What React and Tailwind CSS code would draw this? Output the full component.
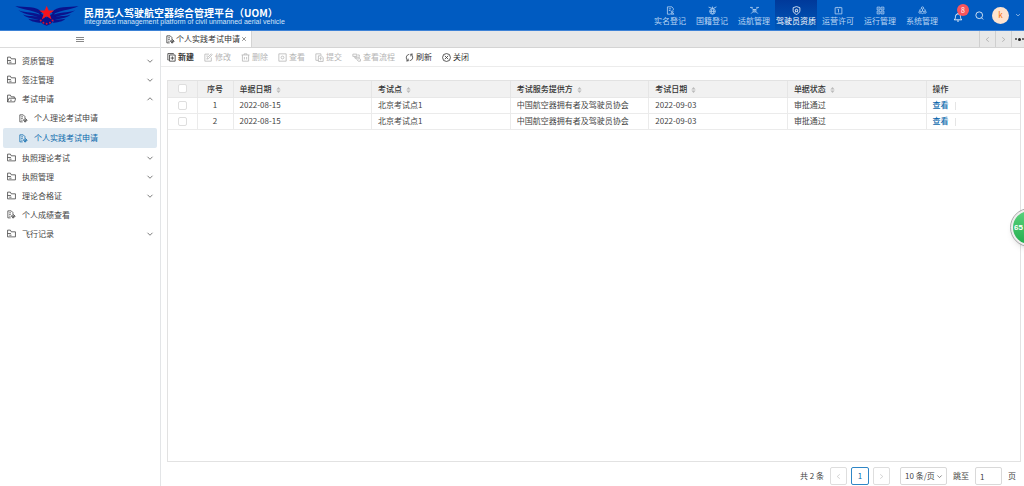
import React, { useState } from 'react';

const NAV = [
  { label: '实名登记', icon: 'docUser' },
  { label: '国籍登记', icon: 'globe' },
  { label: '适航管理', icon: 'drone' },
  { label: '驾驶员资质', icon: 'shield', active: true },
  { label: '运营许可', icon: 'permit' },
  { label: '运行管理', icon: 'grid' },
  { label: '系统管理', icon: 'nodes' },
];

const MENU = [
  { label: '资质管理', icon: 'folder' },
  { label: '签注管理', icon: 'folder' },
  {
    label: '考试申请',
    icon: 'folderOpen',
    open: true,
    children: [
      { label: '个人理论考试申请' },
      { label: '个人实践考试申请', active: true },
    ],
  },
  { label: '执照理论考试', icon: 'folder' },
  { label: '执照管理', icon: 'folder' },
  { label: '理论合格证', icon: 'folder' },
  { label: '个人成绩查看', icon: 'docEdit', leaf: true },
  { label: '飞行记录', icon: 'folder' },
];

const ACTIONS = [
  { label: '新建', icon: 'add', strong: true },
  { label: '修改', icon: 'edit', disabled: true },
  { label: '删除', icon: 'trash', disabled: true },
  { label: '查看', icon: 'view', disabled: true },
  { label: '提交', icon: 'submit', disabled: true },
  { label: '查看流程', icon: 'flow', disabled: true },
  { label: '刷新', icon: 'refresh' },
  { label: '关闭', icon: 'close' },
];

const COLUMNS = ['单据日期', '考试点', '考试服务提供方', '考试日期', '单据状态'];

const ROWS = [
  { id: 1, cells: ['2022-08-15', '北京考试点1', '中国航空器拥有者及驾驶员协会', '2022-09-03', '审批通过'] },
  { id: 2, cells: ['2022-08-15', '北京考试点1', '中国航空器拥有者及驾驶员协会', '2022-09-03', '审批通过'] },
];

const SHAPES = {
  folder: <path d="M1 14V2h5l1.500 3H15v9zM1 8h6M4 11h4" />,
  folderOpen: <path d="M1 14V2h5l1.500 3H13v2.500M1 14l2.500-6.500H15.500L13.500 14zM5.500 11h3" />,
  docEdit: <path d="M6.500 14h-5V1.500h6L10.500 4.500V7M4 5h3M4 8h2.500M4 11h2M11 7.500l3.500 3.500-3.500 3.500-3.500-3.500zM11 9.500v5M9 11h5" />,
  docUser: <path d="M7 14.500H2.500v-13h8l2.500 3v3M5 5h4M5 8h3M11 8.500a1.500 1.500 0 1 1 0 3 1.500 1.500 0 0 1 0-3M8 14.500c0-3 6-3 6 0z" />,
  globe: <path d="M1 2l6 2M15 1.500l-6 3M8 1v3M8 4.500a5 5 0 1 1 0 10 5 5 0 0 1 0-10M3 9.500h10M8 4.500c-3 3-3 7 0 10M8 4.500c3 3 3 7 0 10" />,
  drone: <path d="M0 2.500h5M11 2.500h5M2.500 3l3 3.500h5l3-3.500M5.500 6.500h5v4h-5zM5.500 10L2 13.500M10.500 10l3.500 3.500M7 8.500h2" />,
  shield: <path d="M8 1l6 2v5c0 3.500-3 5.500-6 7-3-1.500-6-3.500-6-7V3zM8 5l1 1.700 1.800.5-1.300 1.500.2 2L8 10l-1.700.700.200-2-1.300-1.500L7 6.700z" />,
  permit: <path d="M2 3h12v11H2zM5.500 1.500v2M10.500 1.500v2M8 5.500v6M6.500 7L8 5.500" />,
  grid: <path d="M2 2h5v5H2zM9 2h5v5H9zM2 9h5v5H2zM9 9h5v5H9zM4 4.500h1M11 4.500h1M4 11.500h1M11 11.500h1" />,
  nodes: <path d="M8 1.500a2 2 0 1 1 0 4 2 2 0 0 1 0-4M3.500 9a2 2 0 1 1 0 4 2 2 0 0 1 0-4M12.500 9a2 2 0 1 1 0 4 2 2 0 0 1 0-4M5.500 4.500C4 5.500 3 7 3 9M10.500 4.500C12 5.500 13 7 13 9M6 13c1.500.700 2.500.700 4 0M8 5.500V9l-2.500 1M8 9l2.500 1" />,
  bell: <path d="M2 12.500h12c-1.500-1.500-2-3-2-5.500a4 4 0 0 0-8 0c0 2.500-.500 4-2 5.500M8 1.500V3M6.500 14.500h3" />,
  search: <path d="M7.500 1.500a6 6 0 1 1 0 12 6 6 0 0 1 0-12M11.500 12l3 3" />,
  down: <path d="M3 5.500l5 5 5-5" />,
  up: <path d="M3 10.500l5-5 5 5" />,
  left: <path d="M11 3L5 8l6 5" />,
  right: <path d="M5 3l6 5-6 5" />,
  cross: <path d="M3 3l10 10M13 3L3 13" />,
  add: <path d="M11.500 2V1h-10v11.500H3M4.500 3.500h10v11h-10zM9.500 6v6M6.500 9h6" />,
  edit: <path d="M9 2H1.500v12.500H13V8M5 11l1-3 7-6.500 1.500 1.500L8 10zM4 5.500h3" />,
  trash: <path d="M1 3.500h14M5.500 3.500v-2h5v2M2.500 3.500v11h11v-11M6 7v4.500M10 7v4.500" />,
  view: <path d="M1.500 1.500h13v13h-13zM8 5.500a2.500 2.500 0 1 1 0 5 2.500 2.500 0 0 1 0-5" />,
  submit: <path d="M6 13H1.500V1.500h9V4M6 15V5h5l3.500 3v7zM10 13V8M8 10l2-2 2 2" />,
  flow: <path d="M1.500 2h7v4h-7zM5 6v3h2M7 7.500h6v3H7zM9 12l2 2.500h4v-4M10 3.500h3v3" />,
  refresh: <path d="M6 14H2M5.500 14V10M5 13.500C0.500 10 2 3 7.500 2.500M10 2h4M10.500 2v4M11 2.500c4.500 3.500 3 10.500-2.500 11" />,
  close: <path d="M8 1a7 7 0 1 1 0 14A7 7 0 0 1 8 1M5 5l6 6M11 5l-6 6" />,
};

const Icon = ({ name, className = 'size-2' }) => (
  <svg
    viewBox="0 0 16 16"
    className={`shrink-0 ${className}`}
    fill="none"
    stroke="currentColor"
    strokeWidth="1.4"
    aria-hidden="true"
  >
    {SHAPES[name]}
  </svg>
);

const Logo = () => (
  <svg viewBox="42 16 198 64" className="h-[21px] w-[66px] shrink-0" aria-hidden="true">
    <g fill="#0a128c">
      <path d="M44 19c30 4 66 0 82 19l-5 8c-12-14-54-14-77-27z" />
      <path d="M54 32c22 9 52 5 68 15l-4 8c-16-10-46-8-64-23z" />
      <path d="M68 45c16 7 38 3 51 9v9c-14-7-38-4-51-18z" />
      <path d="M84 58c10 4 24 1 34 4l4 9c-12-3-28-2-38-13z" />
      <path d="M237 19c-30 4-66 0-82 19l5 8c12-14 54-14 77-27z" />
      <path d="M227 32c-22 9-52 5-68 15l4 8c16-10 46-8 64-23z" />
      <path d="M213 45c-16 7-38 3-51 9v9c14-7 38-4 51-18z" />
      <path d="M197 58c-10 4-24 1-34 4l-4 9c12-3 28-2 38-13z" />
      <path d="M120 40c-8 16-2 32 20 39 22-7 30-23 22-39l-10 6-12 8-11-8z" />
    </g>
    <path fill="#f5121d" d="M140 18l6 15h17l-14 10 6 17-15-10-15 10 6-17-14-10h17z" />
    <g fill="#d5122f">
      <circle cx="122" cy="63" r="3" />
      <circle cx="130" cy="70" r="3" />
      <circle cx="140" cy="73" r="3" />
      <circle cx="150" cy="70" r="3" />
      <circle cx="158" cy="63" r="3" />
    </g>
  </svg>
);

const TopBar = () => (
  <header className="flex h-[31px] shrink-0 items-stretch border-b border-[#3d82d6] bg-[#005bc1] text-white">
    <div className="flex items-center gap-1 pl-3.5">
      <Logo />
      <div className="pt-0.5">
        <h1 className="text-[10px] leading-[11px] font-bold whitespace-nowrap">民用无人驾驶航空器综合管理平台（UOM）</h1>
        <p className="font-['Liberation_Sans'] text-[7px] leading-[8px] whitespace-nowrap text-[#d3e4f8]">
          Integrated management platform of civil unmanned aerial vehicle
        </p>
      </div>
    </div>
    <nav className="ml-auto flex">
      {NAV.map((item) => (
        <a
          key={item.label}
          href="#"
          className={`flex w-[42px] flex-col items-center gap-px pt-1.5 leading-[10px] whitespace-nowrap ${
            item.active ? 'bg-linear-to-b from-[#00399a] to-[#0057b8] text-white' : 'text-[#b9d5f3]'
          }`}
        >
          <Icon name={item.icon} className="size-[9px]" />
          {item.label}
        </a>
      ))}
    </nav>
    <div className="flex items-center pl-2.5">
      <button type="button" aria-label="消息" className="relative pt-1">
        <Icon name="bell" className="size-2.5" />
        <span className="absolute -top-1 left-1 flex size-3 items-center justify-center rounded-full bg-[#f9545c] text-[7px]">
          8
        </span>
      </button>
      <button type="button" aria-label="搜索" className="ml-3">
        <Icon name="search" className="size-[9px]" />
      </button>
      <button type="button" className="ml-2 flex size-[17px] items-center justify-center rounded-full bg-[#fde3cf] text-[8px] text-[#f56a00]">
        k
      </button>
      <button type="button" aria-label="展开" className="mr-[3px] ml-1.5">
        <Icon name="down" className="size-1.5" />
      </button>
    </div>
  </header>
);

const Sidebar = () => (
  <aside className="flex w-[161px] shrink-0 flex-col border-r border-[#e3e5e7] text-[#444]">
    <button type="button" aria-label="收起菜单" className="flex h-[17px] flex-col items-center justify-center gap-px border-b border-[#dcdcdc]">
      <span className="h-px w-2 bg-[#888]" />
      <span className="h-px w-2 bg-[#888]" />
      <span className="h-px w-2 bg-[#888]" />
    </button>
    <ul className="px-[3px] pt-[3px]">
      {MENU.map((item) => (
        <li key={item.label}>
          <a href="#" className="flex h-[19px] items-center pr-[3px] pl-1">
            <Icon name={item.icon} className="mr-1.5 size-[9px]" />
            {item.label}
            {!item.leaf && <Icon name={item.open ? 'up' : 'down'} className="ml-auto size-2" />}
          </a>
          {item.children && (
            <ul>
              {item.children.map((sub) => (
                <li key={sub.label}>
                  <a
                    href="#"
                    className={`flex h-5 items-center rounded-xs pl-4 ${sub.active ? 'bg-[#dde8f1] text-[#0a68ac]' : ''}`}
                  >
                    <Icon name="docEdit" className="mr-1.5 size-[9px]" />
                    {sub.label}
                  </a>
                </li>
              ))}
            </ul>
          )}
        </li>
      ))}
    </ul>
  </aside>
);

const TabStrip = () => (
  <div className="flex h-[17px] shrink-0 border-b border-[#d4d4d4] bg-[#e8e8e8] text-[#333]">
    <div className="flex items-center border-r border-[#d4d4d4] bg-white pr-1 pl-[5px]">
      <Icon name="docEdit" className="mr-px size-[9px]" />
      个人实践考试申请
      <button type="button" aria-label="关闭标签" className="ml-px">
        <Icon name="cross" className="size-1.5" />
      </button>
    </div>
    <div className="ml-auto flex">
      <button type="button" aria-label="向左" className="flex w-4 items-center justify-center border-l border-[#cfcfcf] text-[#999]">
        <Icon name="left" className="size-[7px]" />
      </button>
      <button type="button" aria-label="向右" className="flex w-4 items-center justify-center border-l border-[#cfcfcf] text-[#999]">
        <Icon name="right" className="size-[7px]" />
      </button>
      <button type="button" aria-label="更多" className="flex w-[13px] items-center justify-end gap-px border-l border-[#cfcfcf]">
        <span className="size-0.5 rounded-full bg-[#444]" />
        <span className="size-[3px] rounded-full bg-[#222]" />
        <span className="size-0.5 rounded-full bg-[#444]" />
      </button>
    </div>
  </div>
);

const Toolbar = () => (
  <div className="flex h-[19px] shrink-0 items-center gap-2.5 border-b border-[#ececec] pl-1.5">
    {ACTIONS.map((action) => (
      <button
        key={action.label}
        type="button"
        disabled={action.disabled}
        className={`flex items-center gap-0.5 ${action.disabled ? 'text-[#b5b5b5]' : 'text-[#333]'} ${
          action.strong ? 'font-bold' : ''
        }`}
      >
        <Icon name={action.icon} className="size-[9px]" />
        {action.label}
      </button>
    ))}
  </div>
);

const SortMark = () => (
  <svg viewBox="0 0 8 10" className="ml-1 inline h-1.5 w-[5px] fill-[#bbb]" aria-hidden="true">
    <path d="M4 0l3.500 4.200h-7zM4 10L.5 5.800h7z" />
  </svg>
);

const CheckBox = ({ label }) => (
  <input
    type="checkbox"
    aria-label={label}
    className="mx-auto block size-[9px] appearance-none rounded-xs border border-[#dedede] bg-white checked:bg-[#0a68ac]"
  />
);

const ExamTable = () => (
  <div className="mt-[13px] mr-[3px] ml-1.5 flex-1 border border-[#e2e2e2]">
    <table className="w-full table-fixed border-collapse text-left leading-[10px] text-[#444]">
      <colgroup>
        <col className="w-[29px]" />
        <col className="w-9" />
        {COLUMNS.map((name) => (
          <col key={name} />
        ))}
        <col className="w-[94px]" />
      </colgroup>
      <thead>
        <tr className="h-4 border-b border-[#e8e8e8] bg-[#f1f1f1] text-[#333]">
          <th className="border-r border-[#e5e5e5]">
            <CheckBox label="全选" />
          </th>
          <th className="border-r border-[#e5e5e5] text-center font-medium">序号</th>
          {COLUMNS.map((name) => (
            <th key={name} className="border-r border-[#e5e5e5] pl-1.5 font-medium whitespace-nowrap">
              {name}
              <SortMark />
            </th>
          ))}
          <th className="pl-1.5 font-medium">操作</th>
        </tr>
      </thead>
      <tbody>
        {ROWS.map((row) => (
          <tr key={row.id} className="h-4 border-b border-[#ebebeb]">
            <td className="border-r border-[#ebebeb]">
              <CheckBox label={`选择第${row.id}行`} />
            </td>
            <td className="border-r border-[#ebebeb] text-center">{row.id}</td>
            {row.cells.map((cell, i) => (
              <td key={COLUMNS[i]} className="border-r border-[#ebebeb] pl-1.5 whitespace-nowrap">
                {cell}
              </td>
            ))}
            <td className="pl-1.5">
              <a href="#" className="mr-1.5 font-medium text-[#0a68ac]">查看</a>
              <span className="inline-block h-2 w-px bg-[#e5e5e5] align-middle" />
            </td>
          </tr>
        ))}
      </tbody>
    </table>
  </div>
);

const Pagination = () => {
  const [page, setPage] = useState('1');

  return (
    <div className="flex h-6 shrink-0 items-center justify-end pt-1 pr-2 text-[#444]">
      <span>共 2 条</span>
      <button type="button" aria-label="上一页" className="ml-1.5 flex h-[18px] w-[17px] items-center justify-center rounded-xs border border-[#dedede] text-[#bbb]">
        <Icon name="left" className="size-[7px]" />
      </button>
      <button type="button" className="ml-1 h-[18px] w-[18px] rounded-xs border border-[#2f86c6] text-[#0a68ac]">
        1
      </button>
      <button type="button" aria-label="下一页" className="ml-1 flex h-[18px] w-[17px] items-center justify-center rounded-xs border border-[#dedede] text-[#bbb]">
        <Icon name="right" className="size-[7px]" />
      </button>
      <div className="relative ml-2.5 flex items-center">
        <select aria-label="每页条数" className="h-[18px] w-[47px] appearance-none rounded-xs border border-[#d9d9d9] pl-1">
          <option>10 条/页</option>
          <option>20 条/页</option>
          <option>50 条/页</option>
        </select>
        <Icon name="down" className="pointer-events-none absolute right-1 size-[7px]" />
      </div>
      <label htmlFor="jump" className="ml-1.5">跳至</label>
      <input
        id="jump"
        value={page}
        onChange={(e) => setPage(e.target.value)}
        className="mr-1.5 ml-1.5 h-[18px] w-[27px] rounded-xs border border-[#d9d9d9] pl-1"
      />
      <span>页</span>
    </div>
  );
};

const App = () => (
  <div
    lang="zh-CN"
    className="relative flex h-screen flex-col overflow-hidden bg-white font-['Noto_Sans_CJK_SC',sans-serif] text-[8px] leading-[12px]"
  >
    <TopBar />
    <div className="flex min-h-0 flex-1">
      <Sidebar />
      <main className="flex min-w-0 flex-1 flex-col">
        <TabStrip />
        <Toolbar />
        <ExamTable />
        <Pagination />
      </main>
    </div>
    {/* Floating score ball on the right edge */}
    <div className="absolute top-[209px] -right-6 flex size-[37px] items-center rounded-full border-2 border-[#eee] bg-linear-to-b from-[#58d27c] to-[#1fae4e] pl-px font-['Liberation_Sans'] text-[8px] font-bold text-white shadow-md outline outline-[#aaa]">
      65
    </div>
  </div>
);

export default App;
